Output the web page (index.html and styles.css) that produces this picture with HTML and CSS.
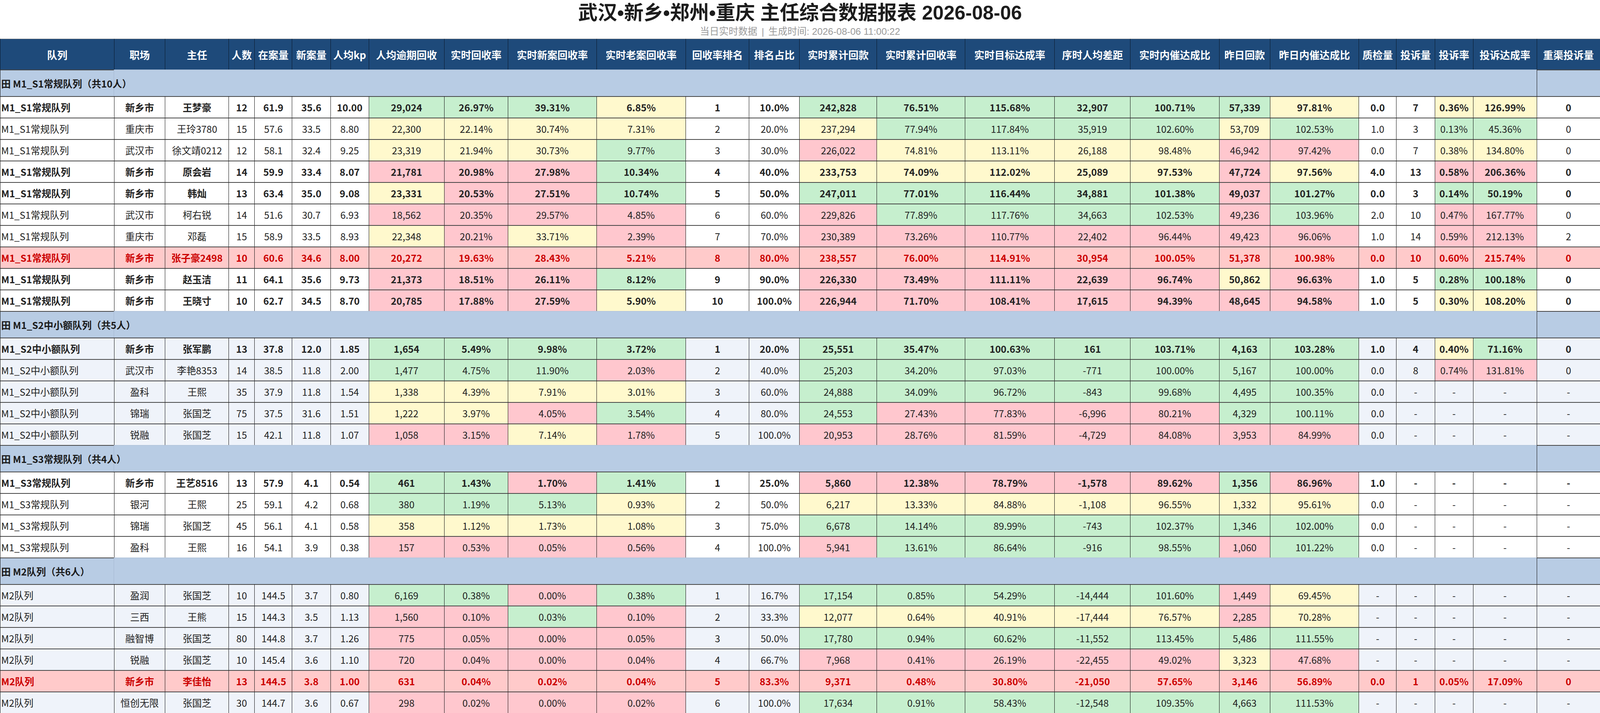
FILE: index.html
```html
<!DOCTYPE html>
<html lang="zh-CN">
<head>
<meta charset="utf-8">
<title>主任综合数据报表</title>
<link rel="stylesheet" href="styles.css">
</head>
<body>
<div class="report">
  <header class="report-head">
    <h1 class="title">武汉•新乡•郑州•重庆 主任综合数据报表 2026-08-06</h1>
    <p class="sub">当日实时数据<span class="sep">|</span>生成时间: 2026-08-06 11:00:22</p>
  </header>
  <table class="grid">
    <colgroup>
      <col><col><col><col><col><col><col><col><col><col><col><col><col><col><col><col><col><col><col><col><col><col><col><col><col>
    </colgroup>
    <thead>
      <tr class="hrow"><th>队列</th><th>职场</th><th>主任</th><th>人数</th><th>在案量</th><th>新案量</th><th>人均kp</th><th>人均逾期回收</th><th>实时回收率</th><th>实时新案回收率</th><th>实时老案回收率</th><th>回收率排名</th><th>排名占比</th><th>实时累计回款</th><th>实时累计回收率</th><th>实时目标达成率</th><th>序时人均差距</th><th>实时内催达成比</th><th>昨日回款</th><th>昨日内催达成比</th><th>质检量</th><th>投诉量</th><th>投诉率</th><th>投诉达成率</th><th>重渠投诉量</th></tr>
    </thead>
    <tbody>
      <tr class="grp"><td class="g-name">田 M1_S1常规队列（共10人）</td><td class="g-fill" colspan="23"></td><td class="g-end"></td></tr>
      <tr class="hl"><td>M1_S1常规队列</td><td>新乡市</td><td>王梦豪</td><td>12</td><td>61.9</td><td>35.6</td><td>10.00</td><td class="g">29,024</td><td class="g">26.97%</td><td class="g">39.31%</td><td class="y">6.85%</td><td>1</td><td>10.0%</td><td class="g">242,828</td><td class="g">76.51%</td><td class="g">115.68%</td><td class="g">32,907</td><td class="g">100.71%</td><td class="g">57,339</td><td class="y">97.81%</td><td>0.0</td><td>7</td><td class="y">0.36%</td><td class="y">126.99%</td><td>0</td></tr>
      <tr><td>M1_S1常规队列</td><td>重庆市</td><td>王玲3780</td><td>15</td><td>57.6</td><td>33.5</td><td>8.80</td><td class="y">22,300</td><td class="y">22.14%</td><td class="y">30.74%</td><td class="y">7.31%</td><td>2</td><td>20.0%</td><td class="y">237,294</td><td class="g">77.94%</td><td class="g">117.84%</td><td class="g">35,919</td><td class="g">102.60%</td><td class="y">53,709</td><td class="g">102.53%</td><td>1.0</td><td>3</td><td class="g">0.13%</td><td class="g">45.36%</td><td>0</td></tr>
      <tr><td>M1_S1常规队列</td><td>武汉市</td><td>徐文靖0212</td><td>12</td><td>58.1</td><td>32.4</td><td>9.25</td><td class="y">23,319</td><td class="y">21.94%</td><td class="y">30.73%</td><td class="g">9.77%</td><td>3</td><td>30.0%</td><td class="r">226,022</td><td class="y">74.81%</td><td class="y">113.11%</td><td class="y">26,188</td><td class="y">98.48%</td><td class="r">46,942</td><td class="r">97.42%</td><td>0.0</td><td>7</td><td class="y">0.38%</td><td class="y">134.80%</td><td>0</td></tr>
      <tr class="hl"><td>M1_S1常规队列</td><td>新乡市</td><td>原会岩</td><td>14</td><td>59.9</td><td>33.4</td><td>8.07</td><td class="r">21,781</td><td class="r">20.98%</td><td class="r">27.98%</td><td class="g">10.34%</td><td>4</td><td>40.0%</td><td class="y">233,753</td><td class="y">74.09%</td><td class="y">112.02%</td><td class="y">25,089</td><td class="y">97.53%</td><td class="r">47,724</td><td class="y">97.56%</td><td>4.0</td><td>13</td><td class="r">0.58%</td><td class="r">206.36%</td><td>0</td></tr>
      <tr class="hl"><td>M1_S1常规队列</td><td>新乡市</td><td>韩灿</td><td>13</td><td>63.4</td><td>35.0</td><td>9.08</td><td class="y">23,331</td><td class="r">20.53%</td><td class="r">27.51%</td><td class="g">10.74%</td><td>5</td><td>50.0%</td><td class="g">247,011</td><td class="g">77.01%</td><td class="g">116.44%</td><td class="g">34,881</td><td class="g">101.38%</td><td class="r">49,037</td><td class="g">101.27%</td><td>0.0</td><td>3</td><td class="g">0.14%</td><td class="g">50.19%</td><td>0</td></tr>
      <tr><td>M1_S1常规队列</td><td>武汉市</td><td>柯右锐</td><td>14</td><td>51.6</td><td>30.7</td><td>6.93</td><td class="r">18,562</td><td class="r">20.35%</td><td class="r">29.57%</td><td class="r">4.85%</td><td>6</td><td>60.0%</td><td class="r">229,826</td><td class="g">77.89%</td><td class="g">117.76%</td><td class="g">34,663</td><td class="g">102.53%</td><td class="r">49,236</td><td class="g">103.96%</td><td>2.0</td><td>10</td><td class="r">0.47%</td><td class="r">167.77%</td><td>0</td></tr>
      <tr><td>M1_S1常规队列</td><td>重庆市</td><td>邓磊</td><td>15</td><td>58.9</td><td>33.5</td><td>8.93</td><td class="y">22,348</td><td class="r">20.21%</td><td class="y">33.71%</td><td class="r">2.39%</td><td>7</td><td>70.0%</td><td class="r">230,389</td><td class="r">73.26%</td><td class="r">110.77%</td><td class="r">22,402</td><td class="r">96.44%</td><td class="r">49,423</td><td class="r">96.06%</td><td>1.0</td><td>14</td><td class="r">0.59%</td><td class="r">212.13%</td><td>2</td></tr>
      <tr class="alert"><td>M1_S1常规队列</td><td>新乡市</td><td>张子豪2498</td><td>10</td><td>60.6</td><td>34.6</td><td>8.00</td><td>20,272</td><td>19.63%</td><td>28.43%</td><td>5.21%</td><td>8</td><td>80.0%</td><td>238,557</td><td>76.00%</td><td>114.91%</td><td>30,954</td><td>100.05%</td><td>51,378</td><td>100.98%</td><td>0.0</td><td>10</td><td>0.60%</td><td>215.74%</td><td>0</td></tr>
      <tr class="hl"><td>M1_S1常规队列</td><td>新乡市</td><td>赵玉洁</td><td>11</td><td>64.1</td><td>35.6</td><td>9.73</td><td class="r">21,373</td><td class="r">18.51%</td><td class="r">26.11%</td><td class="g">8.12%</td><td>9</td><td>90.0%</td><td class="r">226,330</td><td class="r">73.49%</td><td class="r">111.11%</td><td class="r">22,639</td><td class="r">96.74%</td><td class="y">50,862</td><td class="r">96.63%</td><td>1.0</td><td>5</td><td class="g">0.28%</td><td class="g">100.18%</td><td>0</td></tr>
      <tr class="hl"><td>M1_S1常规队列</td><td>新乡市</td><td>王晓寸</td><td>10</td><td>62.7</td><td>34.5</td><td>8.70</td><td class="r">20,785</td><td class="r">17.88%</td><td class="r">27.59%</td><td class="y">5.90%</td><td>10</td><td>100.0%</td><td class="r">226,944</td><td class="r">71.70%</td><td class="r">108.41%</td><td class="r">17,615</td><td class="r">94.39%</td><td class="r">48,645</td><td class="r">94.58%</td><td>1.0</td><td>5</td><td class="y">0.30%</td><td class="y">108.20%</td><td>0</td></tr>
    </tbody>
    <tbody class="alt">
      <tr class="grp"><td class="g-name">田 M1_S2中小额队列（共5人）</td><td class="g-fill" colspan="23"></td><td class="g-end"></td></tr>
      <tr class="hl"><td>M1_S2中小额队列</td><td>新乡市</td><td>张军鹏</td><td>13</td><td>37.8</td><td>12.0</td><td>1.85</td><td class="g">1,654</td><td class="g">5.49%</td><td class="g">9.98%</td><td class="g">3.72%</td><td>1</td><td>20.0%</td><td class="g">25,551</td><td class="g">35.47%</td><td class="g">100.63%</td><td class="g">161</td><td class="g">103.71%</td><td class="g">4,163</td><td class="g">103.28%</td><td>1.0</td><td>4</td><td class="y">0.40%</td><td class="g">71.16%</td><td>0</td></tr>
      <tr><td>M1_S2中小额队列</td><td>武汉市</td><td>李艳8353</td><td>14</td><td>38.5</td><td>11.8</td><td>2.00</td><td class="g">1,477</td><td class="g">4.75%</td><td class="g">11.90%</td><td class="r">2.03%</td><td>2</td><td>40.0%</td><td class="g">25,203</td><td class="g">34.20%</td><td class="g">97.03%</td><td class="g">-771</td><td class="g">100.00%</td><td class="g">5,167</td><td class="g">100.00%</td><td>0.0</td><td>8</td><td class="r">0.74%</td><td class="r">131.81%</td><td>0</td></tr>
      <tr><td>M1_S2中小额队列</td><td>盈科</td><td>王熙</td><td>35</td><td>37.9</td><td>11.8</td><td>1.54</td><td class="y">1,338</td><td class="y">4.39%</td><td class="y">7.91%</td><td class="y">3.01%</td><td>3</td><td>60.0%</td><td class="g">24,888</td><td class="g">34.09%</td><td class="g">96.72%</td><td class="g">-843</td><td class="g">99.68%</td><td class="g">4,495</td><td class="g">100.35%</td><td>0.0</td><td>-</td><td>-</td><td>-</td><td>-</td></tr>
      <tr><td>M1_S2中小额队列</td><td>锦瑞</td><td>张国芝</td><td>75</td><td>37.5</td><td>31.6</td><td>1.51</td><td class="y">1,222</td><td class="y">3.97%</td><td class="r">4.05%</td><td class="g">3.54%</td><td>4</td><td>80.0%</td><td class="g">24,553</td><td class="r">27.43%</td><td class="r">77.83%</td><td class="r">-6,996</td><td class="r">80.21%</td><td class="g">4,329</td><td class="g">100.11%</td><td>0.0</td><td>-</td><td>-</td><td>-</td><td>-</td></tr>
      <tr><td>M1_S2中小额队列</td><td>锐融</td><td>张国芝</td><td>15</td><td>42.1</td><td>11.8</td><td>1.07</td><td class="r">1,058</td><td class="r">3.15%</td><td class="y">7.14%</td><td class="r">1.78%</td><td>5</td><td>100.0%</td><td class="r">20,953</td><td class="r">28.76%</td><td class="r">81.59%</td><td class="r">-4,729</td><td class="r">84.08%</td><td class="r">3,953</td><td class="r">84.99%</td><td>0.0</td><td>-</td><td>-</td><td>-</td><td>-</td></tr>
    </tbody>
    <tbody>
      <tr class="grp"><td class="g-name">田 M1_S3常规队列（共4人）</td><td class="g-fill" colspan="23"></td><td class="g-end"></td></tr>
      <tr class="hl"><td>M1_S3常规队列</td><td>新乡市</td><td>王艺8516</td><td>13</td><td>57.9</td><td>4.1</td><td>0.54</td><td class="g">461</td><td class="g">1.43%</td><td class="r">1.70%</td><td class="g">1.41%</td><td>1</td><td>25.0%</td><td class="r">5,860</td><td class="r">12.38%</td><td class="r">78.79%</td><td class="r">-1,578</td><td class="r">89.62%</td><td class="g">1,356</td><td class="r">86.96%</td><td>1.0</td><td>-</td><td>-</td><td>-</td><td>-</td></tr>
      <tr><td>M1_S3常规队列</td><td>银河</td><td>王熙</td><td>25</td><td>59.1</td><td>4.2</td><td>0.68</td><td class="g">380</td><td class="g">1.19%</td><td class="g">5.13%</td><td class="y">0.93%</td><td>2</td><td>50.0%</td><td class="y">6,217</td><td class="y">13.33%</td><td class="y">84.88%</td><td class="y">-1,108</td><td class="y">96.55%</td><td class="y">1,332</td><td class="y">95.61%</td><td>0.0</td><td>-</td><td>-</td><td>-</td><td>-</td></tr>
      <tr><td>M1_S3常规队列</td><td>锦瑞</td><td>张国芝</td><td>45</td><td>56.1</td><td>4.1</td><td>0.58</td><td class="y">358</td><td class="y">1.12%</td><td class="y">1.73%</td><td class="y">1.08%</td><td>3</td><td>75.0%</td><td class="g">6,678</td><td class="g">14.14%</td><td class="g">89.99%</td><td class="g">-743</td><td class="g">102.37%</td><td class="g">1,346</td><td class="g">102.00%</td><td>0.0</td><td>-</td><td>-</td><td>-</td><td>-</td></tr>
      <tr><td>M1_S3常规队列</td><td>盈科</td><td>王熙</td><td>16</td><td>54.1</td><td>3.9</td><td>0.38</td><td class="r">157</td><td class="r">0.53%</td><td class="r">0.05%</td><td class="r">0.56%</td><td>4</td><td>100.0%</td><td class="r">5,941</td><td class="g">13.61%</td><td class="g">86.64%</td><td class="g">-916</td><td class="g">98.55%</td><td class="r">1,060</td><td class="g">101.22%</td><td>0.0</td><td>-</td><td>-</td><td>-</td><td>-</td></tr>
    </tbody>
    <tbody class="alt">
      <tr class="grp"><td class="g-name">田 M2队列（共6人）</td><td class="g-fill" colspan="23"></td><td class="g-end"></td></tr>
      <tr><td>M2队列</td><td>盈润</td><td>张国芝</td><td>10</td><td>144.5</td><td>3.7</td><td>0.80</td><td class="g">6,169</td><td class="g">0.38%</td><td class="r">0.00%</td><td class="g">0.38%</td><td>1</td><td>16.7%</td><td class="g">17,154</td><td class="g">0.85%</td><td class="g">54.29%</td><td class="g">-14,444</td><td class="g">101.60%</td><td class="r">1,449</td><td class="y">69.45%</td><td>-</td><td>-</td><td>-</td><td>-</td><td>-</td></tr>
      <tr><td>M2队列</td><td>三西</td><td>王熊</td><td>15</td><td>144.3</td><td>3.5</td><td>1.13</td><td class="r">1,560</td><td class="r">0.10%</td><td class="g">0.03%</td><td class="r">0.10%</td><td>2</td><td>33.3%</td><td class="y">12,077</td><td class="y">0.64%</td><td class="y">40.91%</td><td class="y">-17,444</td><td class="y">76.57%</td><td class="r">2,285</td><td class="y">70.28%</td><td>-</td><td>-</td><td>-</td><td>-</td><td>-</td></tr>
      <tr><td>M2队列</td><td>融智博</td><td>张国芝</td><td>80</td><td>144.8</td><td>3.7</td><td>1.26</td><td class="r">775</td><td class="r">0.05%</td><td class="r">0.00%</td><td class="r">0.05%</td><td>3</td><td>50.0%</td><td class="g">17,780</td><td class="g">0.94%</td><td class="g">60.62%</td><td class="g">-11,552</td><td class="g">113.45%</td><td class="g">5,486</td><td class="g">111.55%</td><td>-</td><td>-</td><td>-</td><td>-</td><td>-</td></tr>
      <tr><td>M2队列</td><td>锐融</td><td>张国芝</td><td>10</td><td>145.4</td><td>3.6</td><td>1.10</td><td class="r">720</td><td class="r">0.04%</td><td class="r">0.00%</td><td class="r">0.04%</td><td>4</td><td>66.7%</td><td class="r">7,968</td><td class="r">0.41%</td><td class="r">26.19%</td><td class="r">-22,455</td><td class="r">49.02%</td><td class="y">3,323</td><td class="r">47.68%</td><td>-</td><td>-</td><td>-</td><td>-</td><td>-</td></tr>
      <tr class="alert"><td>M2队列</td><td>新乡市</td><td>李佳怡</td><td>13</td><td>144.5</td><td>3.8</td><td>1.00</td><td>631</td><td>0.04%</td><td>0.02%</td><td>0.04%</td><td>5</td><td>83.3%</td><td>9,371</td><td>0.48%</td><td>30.80%</td><td>-21,050</td><td>57.65%</td><td>3,146</td><td>56.89%</td><td>0.0</td><td>1</td><td>0.05%</td><td>17.09%</td><td>0</td></tr>
      <tr><td>M2队列</td><td>恒创无限</td><td>张国芝</td><td>30</td><td>144.7</td><td>3.6</td><td>0.67</td><td class="r">298</td><td class="r">0.02%</td><td class="r">0.00%</td><td class="r">0.02%</td><td>6</td><td>100.0%</td><td class="g">17,634</td><td class="g">0.91%</td><td class="g">58.43%</td><td class="g">-12,548</td><td class="g">109.35%</td><td class="g">4,663</td><td class="g">111.53%</td><td>-</td><td>-</td><td>-</td><td>-</td><td>-</td></tr>
    </tbody>
  </table>
</div>
</body>
</html>
```

FILE: styles.css
```css
html, body {
  margin: 0;
  padding: 0;
  background: #ffffff;
}

body {
  font-family: "Noto Sans CJK SC", "Noto Sans", sans-serif;
  color: #222222;
}

.report {
  width: 100%;
}

/* ---------- heading ---------- */
.report-head {
  height: 99px;
  text-align: center;
  font-family: "Liberation Sans", "Noto Sans CJK SC", sans-serif;
}

.title {
  margin: 0;
  font-size: 50px;
  line-height: 66px;
  font-weight: 700;
  color: #1c1c1c;
}

.sub {
  margin: 0;
  font-size: 24.5px;
  line-height: 30px;
  color: #9a9a9a;
}

.sep {
  margin: 0 11px;
}

/* ---------- table ---------- */
.grid {
  width: 100%;
  table-layout: fixed;
  border-collapse: separate;
  border-spacing: 0;
  font-size: 24.5px;
}

.grid col:nth-child(1)  { width: 7.125%; }
.grid col:nth-child(2)  { width: 3.1875%; }
.grid col:nth-child(3)  { width: 3.979%; }
.grid col:nth-child(4)  { width: 1.604%; }
.grid col:nth-child(5)  { width: 2.354%; }
.grid col:nth-child(6)  { width: 2.396%; }
.grid col:nth-child(7)  { width: 2.396%; }
.grid col:nth-child(8)  { width: 4.708%; }
.grid col:nth-child(9)  { width: 4%; }
.grid col:nth-child(10) { width: 5.521%; }
.grid col:nth-child(11) { width: 5.583%; }
.grid col:nth-child(12) { width: 3.958%; }
.grid col:nth-child(13) { width: 3.146%; }
.grid col:nth-child(14) { width: 4.833%; }
.grid col:nth-child(15) { width: 5.521%; }
.grid col:nth-child(16) { width: 5.583%; }
.grid col:nth-child(17) { width: 4.75%; }
.grid col:nth-child(18) { width: 5.542%; }
.grid col:nth-child(19) { width: 3.1875%; }
.grid col:nth-child(20) { width: 5.542%; }
.grid col:nth-child(21) { width: 2.354%; }
.grid col:nth-child(22) { width: 2.396%; }
.grid col:nth-child(23) { width: 2.396%; }
.grid col:nth-child(24) { width: 3.979%; }
.grid col:nth-child(25) { width: 3.958%; }

.grid th,
.grid td {
  padding: 0 2px;
  white-space: nowrap;
  text-align: center;
  vertical-align: middle;
  overflow: hidden;
}

.hrow {
  height: 79px;
}

.grid th {
  background: #1e4a7a;
  color: #ffffff;
  font-size: 26px;
  font-weight: 700;
  border-top: 1px solid #8c8c8c;
  border-left: 1px solid #0b1a2c;
}

.grid td {
  border-top: 2px solid #464646;
  border-left: 1px solid #111111;
  font-weight: 400;
}

.grid tr > td:first-child {
  text-align: left;
  padding-left: 2px;
}

tbody tr {
  height: 55px;
}

.alt tr {
  background: #eff3fa;
}

.hl td {
  font-weight: 700;
}

.grid td.g {
  background: #c6efce;
}

.grid td.y {
  background: #fff9cd;
}

.grid td.r {
  background: #ffc7ce;
}

.alert td {
  background: #ffcaca;
  color: #cc0000;
  font-weight: 700;
}

/* ---------- group rows ---------- */
tr.grp {
  height: 68px;
  background: #b8cce4;
}

.grid td.g-name {
  overflow: visible;
  padding-left: 8px;
  font-weight: 700;
  color: #1a1a1a;
  border-right: 1px solid #a4b7d0;
}

.grid td.g-fill {
  border-top: 2px solid #b4c6dd;
  border-left: 0;
}

.grid td.g-end {
  border-left: 1px solid #111111;
}
```
